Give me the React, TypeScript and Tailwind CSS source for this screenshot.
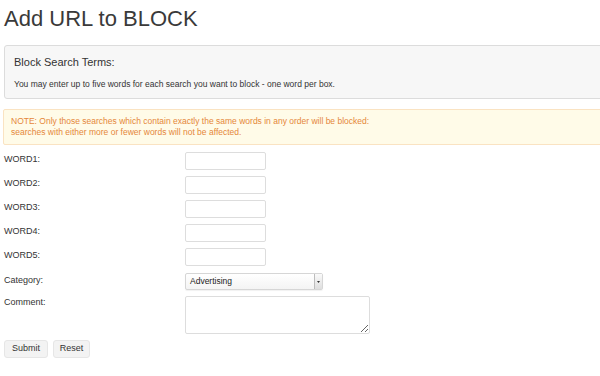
import React from "react";

const words = ["WORD1:", "WORD2:", "WORD3:", "WORD4:", "WORD5:"];

export default function App() {
  return (
    <div
      className="w-full min-h-[376px] overflow-hidden bg-white px-[4px] text-[#333]"
      style={{ fontFamily: '"Liberation Sans", Arial, sans-serif' }}
    >
      {/* Page title */}
      <h1 className="pt-[6px] text-[22px] leading-[26px] font-normal text-[#3a3a3a]">Add URL to BLOCK</h1>

      {/* Info panel */}
      <div className="mt-[13px] -mr-[10px] h-[54px] rounded-[3px] border border-[#dcdcdc] bg-[#f7f7f7] px-[9px] pt-[9px]">
        <h2 className="text-[11px] leading-[14px] text-[#333]">Block Search Terms:</h2>
        <p className="mt-[9px] text-[8.5px] leading-[12px] text-[#333]">
          You may enter up to five words for each search you want to block - one word per box.
        </p>
      </div>

      {/* Warning */}
      <div className="mt-[10px] -ml-[1px] -mr-[10px] h-[36px] rounded-[2px] border border-[#fae3c2] bg-[#fffbe8] px-[7px] pt-[6px] text-[8.5px] leading-[11px] text-[#e5873a]">
        <p>NOTE: Only those searches which contain exactly the same words in any order will be blocked:</p>
        <p>searches with either more or fewer words will not be affected.</p>
      </div>

      {/* Form */}
      <form className="mt-[7px] flex flex-col gap-[6px] text-[9px]" onSubmit={(e) => e.preventDefault()}>
        {words.map((w) => (
          <div key={w} className="flex items-start">
            <label className="w-[181px] pt-[1px] leading-[12px]">{w}</label>
            <input
              type="text"
              className="h-[18px] w-[81px] rounded-[2px] border border-[#dddddd] bg-white outline-none"
            />
          </div>
        ))}

        <div className="mt-[1px] flex items-start">
          <label className="w-[181px] pt-[1px] leading-[12px]">Category:</label>
          <div className="flex h-[17px] w-[138px] items-stretch rounded-[2px] border border-[#d6d6d6] bg-gradient-to-b from-white to-[#f4f4f4] shadow-[0_1px_1px_rgba(0,0,0,0.06)]">
            <span className="flex-1 pl-[4px] text-[8.5px] leading-[15px] text-[#222]">Advertising</span>
            <span className="flex w-[8px] items-center justify-center border-l border-[#bdbdbd] bg-gradient-to-b from-[#fafafa] to-[#dedede]">
              <svg width="3" height="2" viewBox="0 0 3 2">
                <path d="M0 0h3L1.5 2z" fill="#333" />
              </svg>
            </span>
          </div>
        </div>

        <div className="flex items-start">
          <label className="w-[181px] leading-[12px]">Comment:</label>
          <textarea className="h-[38px] w-[185px] rounded-[2px] border border-[#dddddd] bg-white outline-none" />
        </div>

        <div className="flex gap-[5px]">
          <button
            type="submit"
            className="h-[18px] w-[44px] rounded-[3px] border border-[#e6e6e6] bg-[#f3f3f3] text-[9px] text-[#333]"
          >
            Submit
          </button>
          <button
            type="reset"
            className="h-[18px] w-[37px] rounded-[3px] border border-[#e6e6e6] bg-[#f3f3f3] text-[9px] text-[#333]"
          >
            Reset
          </button>
        </div>
      </form>
    </div>
  );
}
